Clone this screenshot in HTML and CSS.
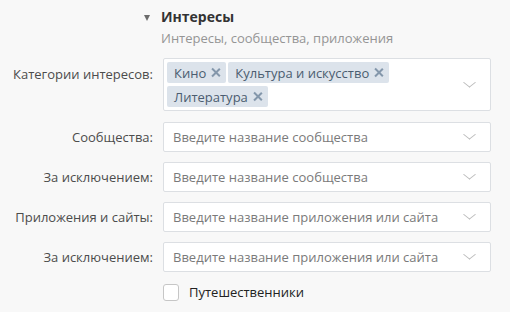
FILE: index.html
```html
<!DOCTYPE html>
<html lang="ru">
<head>
    <meta charset="UTF-8">
    <title>Интересы</title>
    <link rel="stylesheet" href="styles.css">
</head>
<body>
    <div class="section">
        <div class="section-head">
            <span class="toggle"></span>
            <div>
                <div class="section-title">Интересы</div>
                <div class="section-sub">Интересы, сообщества, приложения</div>
            </div>
        </div>

        <div class="row row-tags">
            <label class="row-label">Категории интересов:</label>
            <div class="select select-tags">
                <div class="tags">
                    <span class="tag">Кино <i class="tag-x"></i></span>
                    <span class="tag">Культура и искусство <i class="tag-x"></i></span>
                    <span class="tag">Литература <i class="tag-x"></i></span>
                </div>
                <span class="arrow"></span>
            </div>
        </div>

        <div class="row">
            <label class="row-label">Сообщества:</label>
            <div class="select">
                <span class="placeholder">Введите название сообщества</span>
                <span class="arrow"></span>
            </div>
        </div>

        <div class="row">
            <label class="row-label">За исключением:</label>
            <div class="select">
                <span class="placeholder">Введите название сообщества</span>
                <span class="arrow"></span>
            </div>
        </div>

        <div class="row">
            <label class="row-label">Приложения и сайты:</label>
            <div class="select">
                <span class="placeholder">Введите название приложения или сайта</span>
                <span class="arrow"></span>
            </div>
        </div>

        <div class="row">
            <label class="row-label">За исключением:</label>
            <div class="select">
                <span class="placeholder">Введите название приложения или сайта</span>
                <span class="arrow"></span>
            </div>
        </div>

        <div class="row row-check">
            <span class="row-label"></span>
            <label class="check"><span class="check-box"></span>Путешественники</label>
        </div>
    </div>
</body>
</html>
```

FILE: styles.css
```css
body {
    margin: 0;
    background: #f8f8f8;
    font-family: "Open Sans", "Liberation Sans", sans-serif;
    font-size: 13px;
    color: #222;
}
.section {
    padding: 8px 19px 0 0;
}
.section-head {
    display: flex;
    align-items: flex-start;
    margin-left: 144px;
    margin-bottom: 12px;
}
.toggle {
    width: 0;
    height: 0;
    margin-top: 7px;
    margin-right: 11px;
    border-left: 3.5px solid transparent;
    border-right: 3.5px solid transparent;
    border-top: 6px solid #6c6c6c;
}
.section-title {
    font-weight: bold;
    font-size: 14px;
    line-height: 18px;
    color: #333;
}
.section-sub {
    margin-top: 4px;
    color: #959595;
    line-height: 16px;
}
.row {
    display: flex;
    align-items: center;
    margin-bottom: 10px;
}
.row-tags {
    align-items: flex-start;
    margin-bottom: 11px;
}
.row-tags .row-label {
    padding-top: 7px;
}
.row-label {
    flex: 0 0 153px;
    text-align: right;
    color: #4c4c4c;
    margin-right: 10px;
}
.select {
    flex: 1;
    display: flex;
    align-items: center;
    height: 28px;
    padding: 0 0 0 9px;
    background: #fff;
    border: 1px solid #dcdfe3;
    border-radius: 2px;
}
.select-tags {
    height: auto;
    padding: 3px 0 3px 3px;
}
.placeholder {
    flex: 1;
    color: #7a7a7a;
}
.tags {
    flex: 1;
    display: flex;
    flex-wrap: wrap;
    gap: 3px 2px;
}
.tag {
    display: flex;
    align-items: center;
    height: 21px;
    padding: 0 6px 0 7px;
    background: #dce3eb;
    border-radius: 2px;
    color: #4b5d70;
}
.tag-x {
    position: relative;
    width: 9px;
    height: 9px;
    margin-left: 5px;
}
.tag-x::before,
.tag-x::after {
    content: "";
    position: absolute;
    left: 4px;
    top: -1px;
    width: 1.6px;
    height: 11px;
    background: #8497ab;
    transform: rotate(45deg);
}
.tag-x::after {
    transform: rotate(-45deg);
}
.arrow {
    width: 8px;
    height: 8px;
    margin: -5px 16px 0 10px;
    border-right: 1px solid #b8b8b8;
    border-bottom: 1px solid #b8b8b8;
    transform: scaleY(0.8) rotate(45deg);
}
.row-check {
    margin-top: 11px;
}
.check {
    display: flex;
    align-items: center;
    color: #222;
}
.check-box {
    width: 14px;
    height: 15px;
    margin-right: 10px;
    background: #fff;
    border: 1px solid #c6c6c6;
    border-radius: 3px;
}
```
